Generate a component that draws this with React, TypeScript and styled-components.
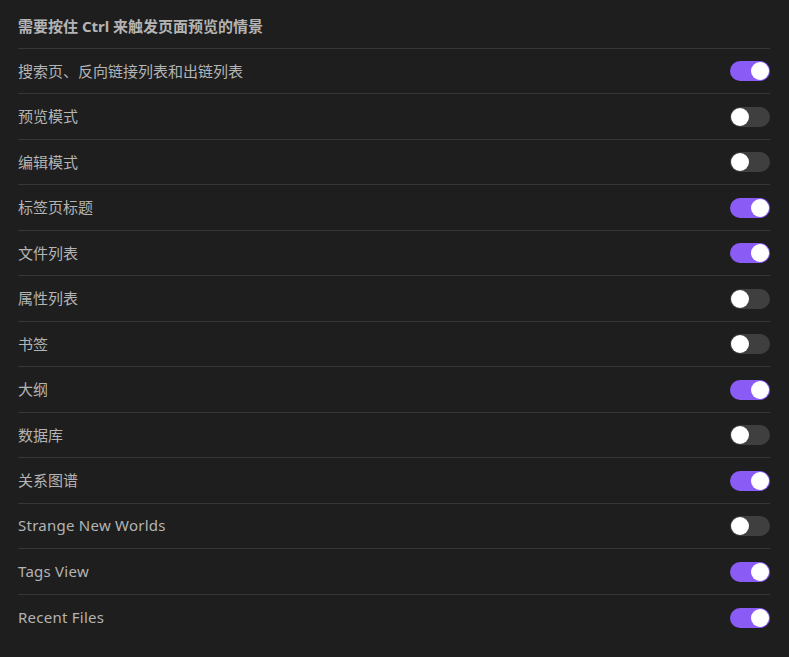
import React from 'react';
import styled, { createGlobalStyle } from 'styled-components';

const GlobalStyle = createGlobalStyle`
  html, body {
    margin: 0;
    padding: 0;
    background: #1e1e1e;
  }
  body {
    font-family: "Segoe UI", "Noto Sans", "Noto Sans CJK SC", sans-serif;
  }
`;

const Panel = styled.div`
  width: 789px;
  height: 657px;
  box-sizing: border-box;
  padding: 0 19px 0 18px;
  background: #1e1e1e;
  color: #b4b4b4;
`;

const Heading = styled.div`
  height: 48.5px;
  display: flex;
  align-items: center;
  padding-top: 3px;
  box-sizing: border-box;
  font-size: 15px;
  font-weight: 700;
  color: #b4b4b4;
  border-bottom: 1px solid #363636;
`;

const Row = styled.div<{ $last?: boolean }>`
  height: 45.5px;
  box-sizing: border-box;
  display: flex;
  align-items: center;
  justify-content: space-between;
  border-bottom: ${(p) => (p.$last ? 'none' : '1px solid #363636')};
`;

const Label = styled.span<{ $latin?: boolean }>`
  font-size: 15px;
  letter-spacing: ${(p) => (p.$latin ? '0.25px' : '0')};
  color: #b4b4b4;
  margin-top: -1px;
`;

const Track = styled.div<{ $on: boolean }>`
  width: 40px;
  height: 20px;
  border-radius: 10px;
  background: ${(p) => (p.$on ? '#8a5cf5' : '#3f3f3f')};
  display: flex;
  align-items: center;
  justify-content: ${(p) => (p.$on ? 'flex-end' : 'flex-start')};
  padding: 0 1px;
  box-sizing: border-box;
  margin-top: 1px;
`;

const Knob = styled.div`
  width: 18px;
  height: 18px;
  border-radius: 50%;
  background: #ffffff;
`;

const items: [string, boolean][] = [
  ['搜索页、反向链接列表和出链列表', true],
  ['预览模式', false],
  ['编辑模式', false],
  ['标签页标题', true],
  ['文件列表', true],
  ['属性列表', false],
  ['书签', false],
  ['大纲', true],
  ['数据库', false],
  ['关系图谱', true],
  ['Strange New Worlds', false],
  ['Tags View', true],
  ['Recent Files', true],
];

const App = () => (
  <>
    <GlobalStyle />
    <Panel>
      <Heading>需要按住 Ctrl 来触发页面预览的情景</Heading>
      {items.map(([label, on], i) => (
        <Row key={label} $last={i === items.length - 1}>
          <Label $latin={/^[A-Za-z ]+$/.test(label)}>{label}</Label>
          <Track $on={on}>
            <Knob />
          </Track>
        </Row>
      ))}
    </Panel>
  </>
);

export default App;
